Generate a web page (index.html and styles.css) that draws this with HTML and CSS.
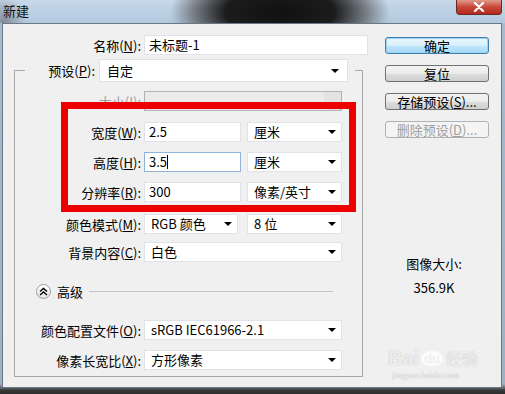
FILE: index.html
```html
<!DOCTYPE html>
<html lang="zh-CN">
<head>
  <meta charset="UTF-8">
  <title>新建</title>
  <link rel="stylesheet" href="styles.css">
</head>
<body>

  <div class="window">
    <!-- Title bar -->
    <div class="titlebar">
      <span class="title">新建</span>
      <div class="close">
        <svg width="14" height="10" viewBox="0 0 14 10"><path d="M3 1 L11 9 M11 1 L3 9" stroke="#fff" stroke-width="2.4" stroke-linecap="round"/></svg>
      </div>
    </div>

    <div class="client">
      <div class="form">
        <div class="row name-row">
          <span class="lbl">名称(<u>N</u>):</span>
          <div class="field name-field">未标题-1</div>
        </div>

        <fieldset class="group">
          <legend class="preset">
            <span class="lbl">预设(<u>P</u>):</span>
            <div class="select preset-select">自定<span class="arrow"></span></div>
          </legend>

          <div class="group-body">
            <div class="row disabled">
              <span class="lbl">大小(<u>I</u>):</span>
              <div class="select size-select"><span class="drop-btn"></span></div>
            </div>
            <div class="row width-row">
              <span class="lbl">宽度(<u>W</u>):</span>
              <div class="field num">2.5</div>
              <div class="select unit">厘米<span class="arrow"></span></div>
            </div>
            <div class="row">
              <span class="lbl">高度(<u>H</u>):</span>
              <div class="field num focus">3.5<span class="caret"></span></div>
              <div class="select unit">厘米<span class="arrow"></span></div>
            </div>
            <div class="row">
              <span class="lbl">分辨率(<u>R</u>):</span>
              <div class="field num">300</div>
              <div class="select unit">像素/英寸<span class="arrow"></span></div>
            </div>
            <div class="row mode-row">
              <span class="lbl">颜色模式(<u>M</u>):</span>
              <div class="select mode">RGB 颜色<span class="arrow"></span></div>
              <div class="select unit">8 位<span class="arrow"></span></div>
            </div>
            <div class="row bg-row">
              <span class="lbl">背景内容(<u>C</u>):</span>
              <div class="select full">白色<span class="arrow"></span></div>
            </div>

            <div class="advanced">
              <span class="adv-icon">
                <svg width="9" height="9" viewBox="0 0 9 9"><path d="M1 4.5 L4.5 1.5 L8 4.5 M1 8 L4.5 5 L8 8" fill="none" stroke="#000" stroke-width="1.4"/></svg>
              </span>
              <span class="adv-text">高级</span>
              <span class="adv-line"></span>
            </div>

            <div class="row profile-row">
              <span class="lbl">颜色配置文件(<u>O</u>):</span>
              <div class="select full">sRGB IEC61966-2.1<span class="arrow"></span></div>
            </div>
            <div class="row">
              <span class="lbl">像素长宽比(<u>X</u>):</span>
              <div class="select full">方形像素<span class="arrow"></span></div>
            </div>

            <!-- annotation -->
            <div class="red-box"></div>
          </div>
        </fieldset>
      </div>

      <div class="side">
        <button class="btn default">确定</button>
        <button class="btn">复位</button>
        <button class="btn">存储预设(<u>S</u>)...</button>
        <button class="btn" disabled>删除预设(<u>D</u>)...</button>

        <div class="image-size">
          <div>图像大小:</div>
          <div class="size-value">356.9K</div>
        </div>
      </div>
    </div>
  </div>

  <!-- Watermark -->
  <div class="watermark">
    <div class="wm-logo"><span class="wm-bai">Bai</span><span class="wm-du">du</span><span class="wm-jy">经验</span></div>
    <div class="wm-url">jingyan.baidu.com</div>
  </div>

</body>
</html>
```

FILE: styles.css
```css
* {
  box-sizing: border-box;
  margin: 0;
  padding: 0;
}

body {
  width: 505px;
  height: 394px;
  overflow: hidden;
  position: relative;
  font-family: "Noto Sans CJK SC", "Liberation Sans", sans-serif;
  font-size: 13px;
  color: #000;
  background: linear-gradient(to bottom, #a9bccf 0, #9fb2c4 384px, #3c3c3c 390px, #2a2a2a 394px);
}

.window {
  display: flex;
  flex-direction: column;
  height: 394px;
}

/* Title bar */
.titlebar {
  height: 23px;
  display: flex;
  align-items: flex-start;
  padding-left: 3px;
  background:
    radial-gradient(ellipse 110px 46px at 280px 12px, #111 0%, #1c1c1c 50%, rgba(70, 70, 70, 0.6) 78%, rgba(150, 170, 190, 0) 100%),
    radial-gradient(ellipse 22px 26px at 4px 22px, rgba(110, 115, 120, 0.7), rgba(110, 115, 120, 0)),
    linear-gradient(to bottom, #c6d8ea, #b3c9de);
}

.title {
  line-height: 22px;
  font-size: 13px;
  color: #111;
}

.close {
  margin-left: auto;
  margin-right: 3px;
  width: 46px;
  height: 15px;
  display: flex;
  align-items: center;
  justify-content: center;
  border: 1px solid #6a2a22;
  border-top: none;
  border-radius: 0 0 4px 4px;
  background: linear-gradient(to bottom, #e29a8a, #c9473a 50%, #b22a1c);
}

.client {
  flex: 1;
  margin: 0 3px 6px 2px;
  display: flex;
  padding-top: 11px;
  background: #f0f0f0;
  border: 1px solid #6b7884;
}

/* Form */
.form {
  width: 365px;
}

.row {
  display: flex;
  align-items: center;
  height: 20px;
}

.lbl {
  width: 126px;
  margin-right: 3px;
  text-align: right;
  white-space: nowrap;
}

.name-row .lbl {
  width: 138px;
}

.disabled .lbl {
  color: #a0a0a0;
}

.field,
.select {
  height: 20px;
  line-height: 18px;
  background: #fff;
  border: 1px solid #e1e2e8;
  white-space: nowrap;
}

.field {
  padding-left: 4px;
}

.select {
  display: flex;
  align-items: center;
  padding-left: 6px;
}

.arrow {
  margin-left: auto;
  margin-right: 5px;
  width: 0;
  height: 0;
  border-left: 4px solid transparent;
  border-right: 4px solid transparent;
  border-top: 4px solid #000;
}

.name-field {
  width: 224px;
}

.num {
  width: 97px;
}

.focus {
  border-color: #8fb3d9;
  display: flex;
  align-items: center;
}

.caret {
  width: 1px;
  height: 14px;
  background: #000;
}

.unit {
  width: 95px;
  margin-left: 6px;
}

.mode {
  width: 94px;
}

.mode + .unit {
  margin-left: 9px;
}

.full {
  width: 198px;
}

.size-select {
  width: 198px;
  background: #ebebeb;
  border-color: #b2b2b2;
  padding-left: 0;
}

.drop-btn {
  margin-left: auto;
  width: 17px;
  height: 18px;
  background: #e3e3e3;
}

/* Group box */
.group {
  margin: 4px 0 0 11px;
  width: 349px;
  padding: 0;
  border: 1px solid #a8a8a8;
  min-inline-size: 0;
}

.preset {
  display: flex;
  align-items: center;
  margin-left: 10px;
  padding: 0 7px 0 1px;
}

.preset .lbl {
  width: 69px;
  margin-right: 4px;
}

.preset-select {
  width: 249px;
  height: 23px;
  padding-left: 7px;
}

.preset-select .arrow {
  margin-right: 8px;
}

.group-body {
  position: relative;
  display: flex;
  flex-direction: column;
  gap: 10px;
  padding: 9px 0 6px;
}

.width-row {
  margin-top: 1px;
}

.mode-row {
  margin-top: 2px;
}

.bg-row {
  margin-top: -2px;
}

.advanced {
  display: flex;
  align-items: center;
  height: 18px;
  margin: 10px 29px 0 21px;
}

.adv-icon {
  width: 15px;
  height: 15px;
  border-radius: 50%;
  border: 1px solid #9c9c9c;
  background: linear-gradient(to bottom, #fff, #e4e4e4);
  display: flex;
  align-items: center;
  justify-content: center;
}

.adv-text {
  margin-left: 6px;
}

.adv-line {
  flex: 1;
  height: 1px;
  margin-left: 6px;
  background: #c4c4c4;
}

.profile-row {
  margin-top: 10px;
}

.red-box {
  position: absolute;
  left: 46px;
  top: 20px;
  width: 295px;
  height: 110px;
  border: 7px solid #ec0000;
}

/* Buttons column */
.side {
  margin-left: 17px;
  width: 104px;
  padding-top: 2px;
  display: flex;
  flex-direction: column;
  gap: 11px;
}

.btn {
  height: 17px;
  font-family: inherit;
  font-size: 13px;
  line-height: 15px;
  color: #000;
  border: 1px solid #707070;
  border-radius: 3px;
  background: linear-gradient(to bottom, #f3f3f3 0, #ebebeb 50%, #dddddd 51%, #cfcfcf 100%);
}

.btn.default {
  border-color: #3c7fb1;
  box-shadow: inset 0 0 0 1px #9ed3f0;
  background: linear-gradient(to bottom, #eaf6fd 0, #d9f0fc 50%, #bee6fd 51%, #a7d9f5 100%);
}

.btn:disabled {
  color: #a0a0a0;
  border-color: #adb2b5;
  background: #f4f4f4;
}

.image-size {
  margin-top: 107px;
  text-align: center;
  line-height: 16px;
  margin-left: -6px;
}

.size-value {
  margin-top: 8px;
}

/* Watermark */
.watermark {
  position: absolute;
  left: 388px;
  top: 346px;
  color: rgba(255, 255, 255, 0.8);
  text-shadow: 0 0 1px rgba(120, 120, 120, 0.6);
}

.wm-logo {
  display: flex;
  align-items: center;
}

.wm-bai {
  font-family: "Liberation Sans", sans-serif;
  font-weight: bold;
  font-size: 20px;
  line-height: 22px;
}

.wm-du {
  margin-left: 2px;
  padding: 0 3px;
  font-family: "Liberation Sans", sans-serif;
  font-weight: bold;
  font-size: 13px;
  color: #f0f0f0;
  background: rgba(255, 255, 255, 0.75);
  border-radius: 50% 50% 45% 45%;
  text-shadow: none;
}

.wm-jy {
  margin-left: 3px;
  font-size: 16px;
}

.wm-url {
  font-family: "Liberation Serif", serif;
  font-size: 9px;
  margin-left: 4px;
  color: rgba(255, 255, 255, 0.7);
}
```
